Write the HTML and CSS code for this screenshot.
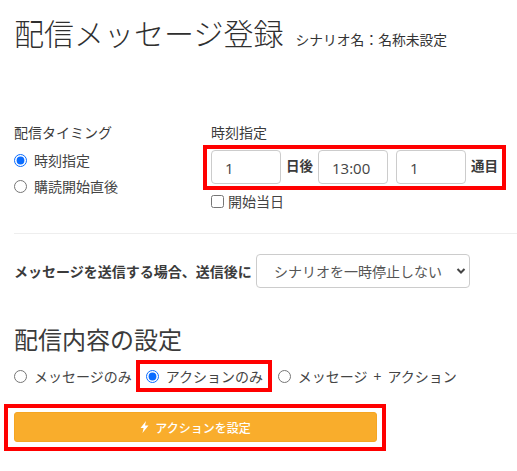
FILE: index.html
```html
<!DOCTYPE html>
<html lang="ja">
<head>
    <meta charset="UTF-8">
    <title>配信メッセージ登録</title>
    <link rel="stylesheet" href="styles.css">
</head>
<body>
    <!-- Title -->
    <div class="page-title">
        <h1>配信メッセージ登録</h1>
        <span class="scenario-name">シナリオ名：名称未設定</span>
    </div>

    <!-- Timing -->
    <div class="timing">
        <div class="timing-type">
            <div class="field-label">配信タイミング</div>
            <label class="radio-row"><input type="radio" name="timing" checked>時刻指定</label>
            <label class="radio-row"><input type="radio" name="timing">購読開始直後</label>
        </div>
        <div class="timing-detail">
            <div class="field-label detail-label">時刻指定</div>
            <div class="red-box time-box">
                <input type="text" class="text-input" value="1">
                <span class="unit unit-day">日後</span>
                <input type="text" class="text-input time-input" value="13:00">
                <input type="text" class="text-input count-input" value="1">
                <span class="unit">通目</span>
            </div>
            <label class="check-row"><input type="checkbox">開始当日</label>
        </div>
    </div>

    <hr class="divider">

    <!-- After send -->
    <div class="after-send">
        <span class="after-label">メッセージを送信する場合、送信後に</span>
        <div class="select-wrap">
            <select class="select-input">
                <option>シナリオを一時停止しない</option>
            </select>
            <svg class="chevron" width="10" height="8" viewBox="0 0 10 8"><path d="M1.5 2 L5 5.5 L8.5 2" fill="none" stroke="#444" stroke-width="2"/></svg>
        </div>
    </div>

    <!-- Content settings -->
    <h2>配信内容の設定</h2>
    <div class="content-type">
        <label class="inline-radio"><input type="radio" name="content">メッセージのみ</label>
        <div class="red-box action-box">
            <label class="inline-radio"><input type="radio" name="content" checked>アクションのみ</label>
        </div>
        <label class="inline-radio spaced"><input type="radio" name="content">メッセージ + アクション</label>
    </div>

    <div class="red-box button-box">
        <button class="action-button">
            <svg width="9" height="12" viewBox="0 0 9 12"><path d="M6 0 L0.5 7 H3.6 L2.5 12 L8.5 4.6 H5 Z" fill="#fff"/></svg>
            アクションを設定
        </button>
    </div>
</body>
</html>
```

FILE: styles.css
```css
body {
    font-family: "Noto Sans CJK JP", "Noto Sans", sans-serif;
    font-size: 14px;
    color: #3b3b3b;
    margin: 0;
    padding: 0;
    overflow: hidden;
}

.page-title {
    display: flex;
    align-items: baseline;
    padding: 12px 0 0 14px;
    height: 108px;
    box-sizing: border-box;
}

h1 {
    font-size: 30px;
    font-weight: 300;
    line-height: 40px;
    color: #2f2f2f;
    margin: 0 12px 0 0;
}

.scenario-name {
    font-size: 13.8px;
    color: #333;
}

.timing {
    display: flex;
    padding-left: 14px;
    height: 125px;
}

.timing-type {
    width: 189px;
}

.field-label {
    line-height: 20px;
    padding-top: 14px;
    margin-bottom: 5px;
}

.detail-label {
    margin-bottom: 3px;
    padding-left: 8px;
}

.radio-row {
    display: flex;
    align-items: center;
    height: 26px;
    color: #444;
}

.radio-row input,
.inline-radio input {
    width: 13px;
    height: 13px;
    margin: 0 7px 0 0;
    accent-color: #0a6cff;
}

.red-box {
    border: 4px solid #f00;
    box-sizing: border-box;
}

.time-box {
    display: flex;
    align-items: flex-start;
    width: 303px;
    height: 45px;
    padding: 1px 0 0 4px;
}

.text-input {
    width: 70px;
    height: 34px;
    box-sizing: border-box;
    border: 1px solid #ccc;
    border-radius: 4px;
    padding: 1px 13px 0;
    font-family: "Open Sans", sans-serif;
    font-size: 15px;
    color: #444;
    background: #fff;
}

.unit {
    font-size: 13.5px;
    font-weight: 700;
    line-height: 30px;
    margin-left: 5px;
}

.unit-day {
    margin-right: 5px;
}

.time-input {
    margin-right: 8px;
}

.check-row {
    display: flex;
    align-items: center;
    margin: 0 0 0 8px;
    height: 22px;
    color: #444;
}

.check-row input {
    width: 13px;
    height: 13px;
    margin: 0 4px 0 0;
}

.divider {
    border: 0;
    border-top: 1px solid #eee;
    margin: 0 0 0 14px;
}

.after-send {
    display: flex;
    align-items: center;
    margin-top: 20px;
    padding-left: 14px;
}

.after-label {
    font-weight: 700;
    width: 242px;
}

.select-wrap {
    position: relative;
}

.select-input {
    appearance: none;
    width: 214px;
    height: 34px;
    border: 1px solid #ccc;
    border-radius: 4px;
    background: #fff;
    padding: 0 17px;
    font-family: inherit;
    font-size: 14px;
    color: #555;
    display: block;
}

.chevron {
    position: absolute;
    right: 4px;
    top: 13px;
}

h2 {
    font-size: 24px;
    font-weight: 400;
    line-height: 34px;
    margin: 34px 0 0 14px;
}

.content-type {
    display: flex;
    align-items: center;
    height: 32px;
    margin-top: 4px;
    padding-left: 14px;
}

.inline-radio {
    display: flex;
    align-items: center;
    color: #444;
}

.inline-radio input {
    margin-right: 7px;
}

.spaced {
    word-spacing: 3px;
}

.action-box {
    display: flex;
    align-items: center;
    width: 136px;
    height: 32px;
    margin: 0 6px 0 4px;
    padding-left: 6px;
}

.button-box {
    width: 382px;
    height: 47px;
    margin: 12px 0 0 4px;
    padding: 4px 6px;
}

.action-button {
    display: flex;
    align-items: center;
    justify-content: center;
    gap: 6px;
    width: 363px;
    height: 30px;
    border: 1px solid #f5a623;
    border-radius: 3px;
    background: #f9ad2c;
    color: #fff;
    font-family: inherit;
    font-size: 12px;
    font-weight: 500;
}
```
